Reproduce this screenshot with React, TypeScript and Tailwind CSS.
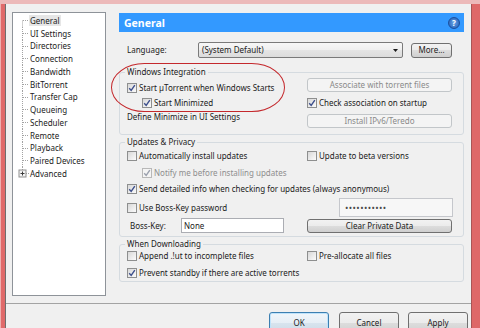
import React from 'react';

const tree = [
  'General',
  'UI Settings',
  'Directories',
  'Connection',
  'Bandwidth',
  'BitTorrent',
  'Transfer Cap',
  'Queueing',
  'Scheduler',
  'Remote',
  'Playback',
  'Paired Devices',
  'Advanced',
];

function Branch({ first, last }: { first?: boolean; last?: boolean }) {
  return (
    <svg width="16" height="13" className="shrink-0 h-[12.75px] overflow-visible">
      <line x1="9.5" y1={first ? 6.5 : 0} x2="9.5" y2={last ? 3 : 13} stroke="#a3a3a3" strokeDasharray="1 1" />
      <line x1={last ? 13 : 10} y1="6.5" x2="16" y2="6.5" stroke="#a3a3a3" strokeDasharray="1 1" />
      {last && (
        <g>
          <rect x="6" y="3" width="7" height="7" fill="#f4f4f4" stroke="#8f8f8f" />
          <line x1="7.5" y1="6.5" x2="11.5" y2="6.5" stroke="#3a3a3a" />
          <line x1="9.5" y1="4.5" x2="9.5" y2="8.5" stroke="#3a3a3a" />
        </g>
      )}
    </svg>
  );
}

function Check({ label, checked, disabled, className = '' }: { label: string; checked?: boolean; disabled?: boolean; className?: string }) {
  return (
    <div className={`flex items-center gap-[2px] h-[12px] whitespace-nowrap ${className}`}>
      <span
        className={`w-[10px] h-[10px] shrink-0 border flex items-center justify-center ${
          disabled ? 'border-[#b8b8b8] bg-[#f4f4f4]' : 'border-[#8e8f8f] bg-linear-to-br from-[#d8d8d8] to-[#fbfbfb]'
        }`}
      >
        {checked && (
          <svg width="8" height="8" viewBox="0 0 8 8">
            <path d="M1.2 4.2 L3.2 6.4 L6.8 1.2" fill="none" stroke={disabled ? '#9aa0ad' : '#3d4f8c'} strokeWidth="1.4" />
          </svg>
        )}
      </span>
      <span className={disabled ? 'text-[#8e8e8e]' : 'text-[#1b1b1b]'}>{label}</span>
    </div>
  );
}

function Btn({ label, disabled, className = '' }: { label: string; disabled?: boolean; className?: string }) {
  return (
    <div
      className={`flex items-center justify-center rounded-[3px] border whitespace-nowrap ${
        disabled
          ? 'border-[#c2c6c9] bg-[#f4f4f4] text-[#8a8a8a]'
          : 'border-[#707070] bg-[linear-gradient(#f2f2f2,#ebebeb_50%,#dddddd_50%,#cfcfcf)] text-[#1b1b1b]'
      } ${className}`}
    >
      {label}
    </div>
  );
}

export default function App() {
  return (
    <div className="w-[480px] h-[328px] overflow-hidden flex flex-col bg-[#e27878] font-['Noto_Sans',sans-serif] text-[8px] leading-[12px] text-[#1b1b1b]">
      <div className="h-[4px] shrink-0 bg-[#ecb9b9]" />
      <div className="flex flex-1 min-h-0">
        <div className="w-[5px] shrink-0 bg-[#e06a6a] border-l border-[#eeb0b0]" />
        <div className="w-[466px] shrink-0 bg-[#f0f0f0] border-l border-[#6e6e6e] flex flex-col">
          {/* top section */}
          <div className="h-[299px] shrink-0 flex pt-[8px] pl-[6px]">
            {/* tree */}
            <div className="w-[94px] h-[284px] border border-[#8e9399] bg-white pt-[1px]">
              {tree.map((t, i) => (
                <div key={t} className="flex items-center h-[12.75px]">
                  <Branch first={i === 0} last={i === tree.length - 1} />
                  <span className={`px-[1px] leading-[11px] ${i === 0 ? 'bg-[#e6e6e6]' : ''}`}>{t}</span>
                </div>
              ))}
            </div>

            {/* main panel */}
            <div className="relative ml-[13px] mt-[1px] w-[345px]">
              <div className="h-[19px] bg-[#3399ff] flex items-center justify-between pl-[5px] pr-[4px]">
                <span className="text-white font-bold text-[10.5px]">General</span>
                <span className="w-[12px] h-[12px] rounded-full bg-radial from-[#6aa6ea] to-[#1d58b0] border border-[#1b4f9e] flex items-center justify-center text-white font-bold text-[8px] leading-none">
                  ?
                </span>
              </div>

              <div className="mt-[10px] h-[16px] flex items-center pl-[8px]">
                <span className="w-[71px]">Language:</span>
                <div className="w-[205px] h-[16px] rounded-[2px] border border-[#7a7a7a] bg-[linear-gradient(#f7f7f7,#efefef_50%,#e5e5e5_50%,#dcdcdc)] flex items-center justify-between pl-[3px] pr-[4px]">
                  <span>(System Default)</span>
                  <svg width="5" height="3" viewBox="0 0 5 3">
                    <polygon points="0,0 5,0 2.5,3" fill="#1b1b1b" />
                  </svg>
                </div>
                <Btn label="More..." className="ml-[8px] w-[41px] h-[15px]" />
              </div>

              {/* Windows Integration */}
              <fieldset className="mt-[8px] border border-[#d5dbe0] rounded-[3px] pl-[7px] pb-[6px]">
                <legend className="-ml-[2px] px-[2px] leading-[12px]">Windows Integration</legend>
                <div className="flex">
                  <div className="w-[180px] flex flex-col">
                    <Check label="Start µTorrent when Windows Starts" checked className="mt-[4px]" />
                    <Check label="Start Minimized" checked className="mt-[3px] ml-[15px]" />
                    <div className="mt-[2px] h-[12px] whitespace-nowrap">Define Minimize in UI Settings</div>
                  </div>
                  <div className="flex flex-col">
                    <Btn label="Associate with torrent files" disabled className="w-[145px] h-[14px]" />
                    <Check label="Check association on startup" checked className="mt-[5px]" />
                    <Btn label="Install IPv6/Teredo" disabled className="mt-[5px] w-[145px] h-[14px]" />
                  </div>
                </div>
              </fieldset>

              {/* Updates & Privacy */}
              <fieldset className="mt-[1px] border border-[#d5dbe0] rounded-[3px] pl-[7px] pb-[3px]">
                <legend className="-ml-[2px] px-[2px] leading-[12px]">Updates &amp; Privacy</legend>
                <div className="flex">
                  <div className="w-[180px] flex flex-col">
                    <Check label="Automatically install updates" className="mt-[2px]" />
                    <Check label="Notify me before installing updates" checked disabled className="mt-[5px] ml-[15px]" />
                    <Check label="Send detailed info when checking for updates (always anonymous)" checked className="mt-[4px]" />
                    <Check label="Use Boss-Key password" className="mt-[7px]" />
                    <div className="mt-[4px] h-[15px] flex items-center">
                      <span className="w-[54px] pl-[3px]">Boss-Key:</span>
                      <div className="w-[103px] h-[15px] border border-[#abadb3] bg-white flex items-center pl-[2px]">None</div>
                    </div>
                  </div>
                  <div className="flex flex-col">
                    <Check label="Update to beta versions" className="mt-[2px]" />
                    <div className="mt-[36px] ml-[32px] w-[114px] h-[19px] border border-[#c5c7cc] bg-[#f7f7f7] flex items-center pl-[5px] text-[#4a4a4a] tracking-[0.4px] text-[9px]">
                      •••••••••••
                    </div>
                    <Btn label="Clear Private Data" className="mt-[2px] w-[145px] h-[14px]" />
                  </div>
                </div>
              </fieldset>

              {/* When Downloading */}
              <fieldset className="mt-[1px] border border-[#d5dbe0] rounded-[3px] pl-[7px] pb-[2px]">
                <legend className="-ml-[2px] px-[2px] leading-[12px]">When Downloading</legend>
                <div className="flex">
                  <div className="w-[180px] flex flex-col">
                    <Check label="Append .!ut to incomplete files" />
                    <Check label="Prevent standby if there are active torrents" checked className="mt-[5px]" />
                  </div>
                  <div className="flex flex-col">
                    <Check label="Pre-allocate all files" />
                  </div>
                </div>
              </fieldset>

              {/* highlight ring */}
              <div className="absolute left-[-8px] top-[50px] w-[174px] h-[49px] rounded-[34px_/_25px] border-[1.5px] border-[#c4282c] pointer-events-none" />
            </div>
          </div>

          {/* buttons */}
          <div className="flex-1 border-t border-[#a3a3a3] pt-[8px] pr-[3px] flex justify-end">
            <div className="w-[60px] h-[22px] rounded-[3px] border border-[#3c7fb1] shadow-[inset_0_0_0_1px_#bfe3fb] bg-[linear-gradient(#f0f6fa,#e6eef5_50%,#d8e4ee_50%,#cbdae7)] flex items-center justify-center">
              OK
            </div>
            <Btn label="Cancel" className="ml-[10px] w-[60px] h-[22px]" />
            <Btn label="Apply" className="ml-[9px] w-[60px] h-[22px]" />
          </div>
        </div>
        <div className="flex-1 bg-[#de6868] border-l border-[#a95555]" />
      </div>
    </div>
  );
}
